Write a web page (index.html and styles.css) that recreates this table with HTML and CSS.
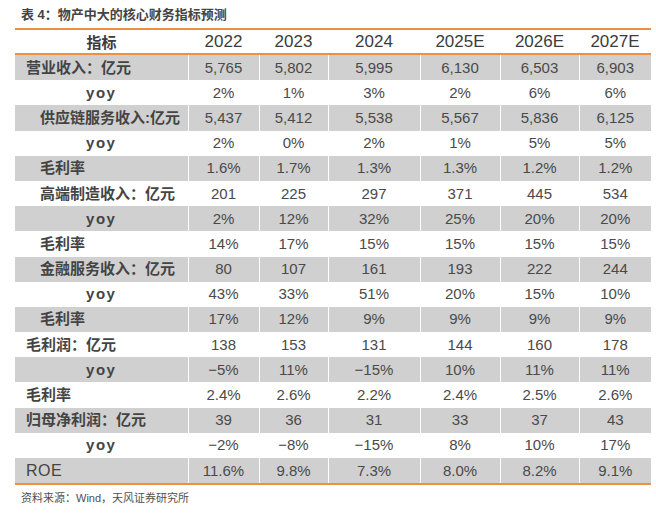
FILE: index.html
```html
<!DOCTYPE html>
<html lang="zh-CN">
<head>
<meta charset="utf-8">
<title>表 4：物产中大的核心财务指标预测</title>
<link rel="stylesheet" href="styles.css">
</head>
<body>
<div class="page">
  <div class="title">表 4：物产中大的核心财务指标预测</div>
  <table class="fin">
    <colgroup>
      <col class="c-label"><col class="c-22"><col class="c-23"><col class="c-24"><col class="c-25"><col class="c-26"><col class="c-27">
    </colgroup>
    <thead>
      <tr><th class="h-label">指标</th><th>2022</th><th>2023</th><th>2024</th><th>2025E</th><th>2026E</th><th>2027E</th></tr>
    </thead>
    <tbody>
      <tr class="g"><td class="l0">营业收入：亿元</td><td>5,765</td><td>5,802</td><td>5,995</td><td>6,130</td><td>6,503</td><td>6,903</td></tr>
      <tr><td class="yoy">yoy</td><td>2%</td><td>1%</td><td>3%</td><td>2%</td><td>6%</td><td>6%</td></tr>
      <tr class="g"><td class="l1">供应链服务收入:亿元</td><td>5,437</td><td>5,412</td><td>5,538</td><td>5,567</td><td>5,836</td><td>6,125</td></tr>
      <tr><td class="yoy">yoy</td><td>2%</td><td>0%</td><td>2%</td><td>1%</td><td>5%</td><td>5%</td></tr>
      <tr class="g"><td class="l1">毛利率</td><td>1.6%</td><td>1.7%</td><td>1.3%</td><td>1.3%</td><td>1.2%</td><td>1.2%</td></tr>
      <tr><td class="l1">高端制造收入：亿元</td><td>201</td><td>225</td><td>297</td><td>371</td><td>445</td><td>534</td></tr>
      <tr class="g"><td class="yoy">yoy</td><td>2%</td><td>12%</td><td>32%</td><td>25%</td><td>20%</td><td>20%</td></tr>
      <tr><td class="l1">毛利率</td><td>14%</td><td>17%</td><td>15%</td><td>15%</td><td>15%</td><td>15%</td></tr>
      <tr class="g"><td class="l1">金融服务收入：亿元</td><td>80</td><td>107</td><td>161</td><td>193</td><td>222</td><td>244</td></tr>
      <tr><td class="yoy">yoy</td><td>43%</td><td>33%</td><td>51%</td><td>20%</td><td>15%</td><td>10%</td></tr>
      <tr class="g"><td class="l1">毛利率</td><td>17%</td><td>12%</td><td>9%</td><td>9%</td><td>9%</td><td>9%</td></tr>
      <tr><td class="l0">毛利润：亿元</td><td>138</td><td>153</td><td>131</td><td>144</td><td>160</td><td>178</td></tr>
      <tr class="g"><td class="yoy">yoy</td><td>−5%</td><td>11%</td><td>−15%</td><td>10%</td><td>11%</td><td>11%</td></tr>
      <tr><td class="l0">毛利率</td><td>2.4%</td><td>2.6%</td><td>2.2%</td><td>2.4%</td><td>2.5%</td><td>2.6%</td></tr>
      <tr class="g"><td class="l0">归母净利润：亿元</td><td>39</td><td>36</td><td>31</td><td>33</td><td>37</td><td>43</td></tr>
      <tr><td class="yoy">yoy</td><td>−2%</td><td>−8%</td><td>−15%</td><td>8%</td><td>10%</td><td>17%</td></tr>
      <tr class="g last"><td class="l0 roe">ROE</td><td>11.6%</td><td>9.8%</td><td>7.3%</td><td>8.0%</td><td>8.2%</td><td>9.1%</td></tr>
    </tbody>
  </table>
  <div class="source">资料来源：Wind，天风证券研究所</div>
</div>
</body>
</html>
```

FILE: styles.css
```css
html, body {
  margin: 0;
  padding: 0;
  background: #ffffff;
}

body {
  font-family: "Liberation Sans", "Noto Sans CJK SC", sans-serif;
  color: #404040;
}

.page {
  padding-top: 5px;
}

.title {
  padding-left: 21px;
  font-size: 13px;
  line-height: 20px;
  font-weight: bold;
  color: #444444;
}

.fin {
  margin-top: 3px;
  margin-left: 15px;
  width: 636px;
  table-layout: fixed;
  border-collapse: collapse;
  border-top: 2px solid #f0903c;
  border-bottom: 2px solid #f0903c;
}

.c-label { width: 173px; }
.c-22 { width: 71px; }
.c-23 { width: 69px; }
.c-24 { width: 92px; }
.c-25 { width: 80px; }
.c-26 { width: 79px; }
.c-27 { width: 72px; }

.fin th {
  height: 23px;
  padding: 0;
  font-size: 17px;
  font-weight: normal;
  color: #3c3c3c;
  text-align: center;
  border-bottom: 2px solid #f0903c;
}

.fin th.h-label {
  font-size: 15px;
  font-weight: bold;
}

.fin td {
  height: 25.2px;
  padding: 0;
  font-size: 15px;
  line-height: 18px;
  text-align: center;
  color: #4a4a4a;
  border-left: 1px solid #ffffff;
  white-space: nowrap;
}

.fin td:first-child {
  border-left: none;
}

.fin tr.g td {
  background: #d0d0d0;
}

.fin td.l0 {
  text-align: left;
  padding-left: 11px;
  font-weight: bold;
  color: #444444;
}

.fin td.l1 {
  text-align: left;
  padding-left: 25px;
  font-weight: bold;
  color: #444444;
}

.fin td.yoy {
  font-weight: bold;
  letter-spacing: 1.5px;
  color: #444444;
}

.fin td.roe {
  font-weight: normal;
  font-size: 16px;
  letter-spacing: 0.5px;
}

.source {
  margin-top: 5px;
  padding-left: 21px;
  font-size: 11px;
  line-height: 16px;
  color: #505050;
}
```
